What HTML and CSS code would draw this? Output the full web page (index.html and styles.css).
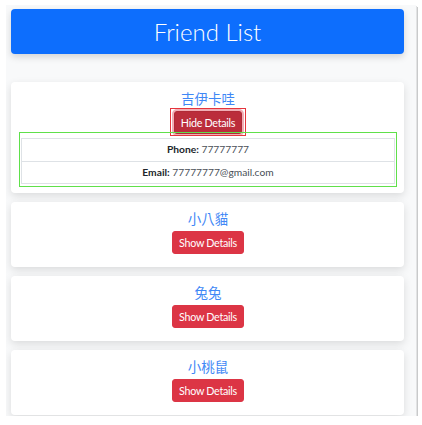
FILE: index.html
```html
<!DOCTYPE html>
<html lang="zh-Hant">
<head>
<meta charset="utf-8">
<title>Friend List</title>
<link rel="stylesheet" href="styles.css">
</head>
<body>
<div class="window">
  <header class="banner">Friend List</header>
  <div class="card">
    <div class="name">吉伊卡哇</div>
    <div class="btn-wrap"><button class="btn btn-active">Hide Details</button></div>
    <div class="details">
      <div class="row"><b>Phone:</b> <span>77777777</span></div>
      <div class="row"><b>Email:</b> <span>77777777@gmail.com</span></div>
    </div>
  </div>
  <div class="card">
    <div class="name">小八貓</div>
    <div class="btn-wrap"><button class="btn">Show Details</button></div>
  </div>
  <div class="card">
    <div class="name">兔兔</div>
    <div class="btn-wrap"><button class="btn">Show Details</button></div>
  </div>
  <div class="card">
    <div class="name">小桃鼠</div>
    <div class="btn-wrap"><button class="btn">Show Details</button></div>
  </div>
</div>
</body>
</html>
```
FILE: styles.css
```css
html, body {
  margin: 0;
  padding: 0;
  background: #ffffff;
}
body {
  font-family: Lato, "Noto Sans CJK TC", sans-serif;
  color: #212529;
}
.window {
  margin: 5px 0 0 6px;
  width: 410px;
  height: 411px;
  box-sizing: border-box;
  padding: 4px 12px 0 5px;
  background: #f8f9fa;
  box-shadow: 1px 1px 0 #e2e3e4, 2px 2px 0 #c9cacb;
  overflow: hidden;
  display: flex;
  flex-direction: column;
  gap: 9px;
}
.banner {
  height: 45px;
  flex: none;
  background: #0d6efd;
  color: #ffffff;
  border-radius: 4px;
  box-shadow: 0 3px 7px rgba(0,0,0,0.15);
  font-family: Lato, sans-serif;
  font-weight: 300;
  font-size: 24px;
  display: flex;
  align-items: center;
  justify-content: center;
  margin-bottom: 19px;
}
.card {
  flex: none;
  background: #ffffff;
  border-radius: 4px;
  box-shadow: 0 3px 8px rgba(0,0,0,0.12);
  padding: 8px 9px 9px 10px;
  display: flex;
  flex-direction: column;
  align-items: stretch;
}
.name {
  font-family: "Noto Sans CJK TC", sans-serif;
  color: #3f88f6;
  font-size: 13.5px;
  line-height: 17px;
  text-align: center;
  margin-bottom: 4px;
}
.btn-wrap {
  display: flex;
  justify-content: center;
  margin-bottom: 4px;
}
.btn {
  font-family: Lato, sans-serif;
  font-size: 10.75px;
  letter-spacing: -0.3px;
  line-height: 15px;
  padding: 3px 6px;
  border: 1px solid #dc3545;
  border-radius: 3px;
  background: #dc3545;
  color: #ffffff;
  position: relative;
}
.btn-active {
  background: #bb2d3b;
  border-color: #b02a37;
  box-shadow: 0 0 0 2px rgba(220,53,69,0.4);
}
.btn-active::after {
  content: "";
  position: absolute;
  left: -5px;
  right: -5px;
  top: -4px;
  bottom: -3px;
  border: 1px solid #e5343c;
}
.details {
  position: relative;
}
.details::after {
  content: "";
  position: absolute;
  left: -2px;
  right: -2px;
  top: -6px;
  bottom: -3px;
  border: 1.5px solid #5fe04a;
  pointer-events: none;
}
.row {
  border: 1px solid #dee2e6;
  text-align: center;
  font-size: 10.25px;
  line-height: 21.5px;
  color: #495057;
}
.row + .row {
  margin-top: -1px;
}
.row b {
  color: #212529;
  font-weight: 700;
}
```
